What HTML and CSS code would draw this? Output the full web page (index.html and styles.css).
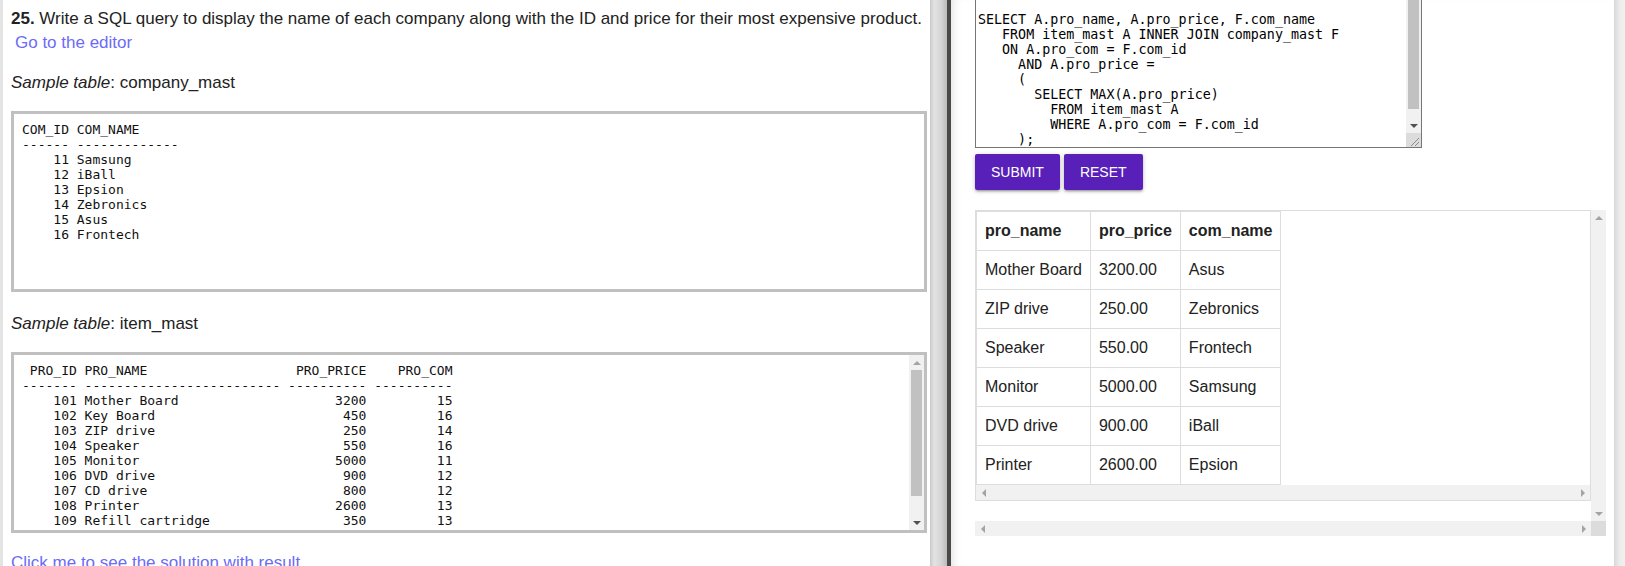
FILE: index.html
```html
<!DOCTYPE html>
<html>
<head>
<meta charset="utf-8">
<link rel="stylesheet" href="styles.css">
</head>
<body>
<div class="page">
  <div class="left">
    <p class="q"><span class="nowrap"><b>25.</b> Write a SQL query to display the name of each company along with the ID and price for their most expensive product.</span><br><a class="link">Go to the editor</a></p>
    <p class="label"><i>Sample table</i>: company_mast</p>
    <div class="sample">
<pre>COM_ID COM_NAME
------ -------------
    11 Samsung
    12 iBall
    13 Epsion
    14 Zebronics
    15 Asus
    16 Frontech</pre>
    </div>
    <p class="label after-box"><i>Sample table</i>: item_mast</p>
    <div class="sample">
<pre> PRO_ID PRO_NAME                   PRO_PRICE    PRO_COM
------- ------------------------- ---------- ----------
    101 Mother Board                    3200         15
    102 Key Board                        450         16
    103 ZIP drive                        250         14
    104 Speaker                          550         16
    105 Monitor                         5000         11
    106 DVD drive                        900         12
    107 CD drive                         800         12
    108 Printer                         2600         13
    109 Refill cartridge                 350         13</pre>
      <div class="vbar">
        <div class="sbtn"><span class="tri-up light"></span></div>
        <div class="thumb box-thumb"></div>
        <div class="fill"></div>
        <div class="sbtn"><span class="tri-down dark"></span></div>
      </div>
    </div>
    <p class="more"><a class="link">Click me to see the solution with result</a></p>
  </div>
  <div class="splitter"></div>
  <div class="divider"></div>
  <div class="right">
    <div class="editor">
<pre class="code">SELECT A.pro_name, A.pro_price, F.com_name
   FROM item_mast A INNER JOIN company_mast F
   ON A.pro_com = F.com_id
     AND A.pro_price =
     (
       SELECT MAX(A.pro_price)
         FROM item_mast A
         WHERE A.pro_com = F.com_id
     );</pre>
      <div class="vbar">
        <div class="thumb ta-thumb"></div>
        <div class="fill"></div>
        <div class="sbtn"><span class="tri-down dark"></span></div>
        <div class="resizer">
          <svg width="15" height="14" viewBox="0 0 15 14"><line x1="13" y1="5" x2="5" y2="13" stroke="#8c8c8c" stroke-width="1"/><line x1="13" y1="9" x2="9" y2="13" stroke="#8c8c8c" stroke-width="1"/></svg>
        </div>
      </div>
    </div>
    <div class="actions">
      <button class="btn">SUBMIT</button>
      <button class="btn">RESET</button>
    </div>
    <div class="result">
      <div class="res-main">
        <div class="twrap">
          <div class="tarea">
            <table>
              <thead>
                <tr><th>pro_name</th><th>pro_price</th><th>com_name</th></tr>
              </thead>
              <tbody>
                <tr><td>Mother Board</td><td>3200.00</td><td>Asus</td></tr>
                <tr><td>ZIP drive</td><td>250.00</td><td>Zebronics</td></tr>
                <tr><td>Speaker</td><td>550.00</td><td>Frontech</td></tr>
                <tr><td>Monitor</td><td>5000.00</td><td>Samsung</td></tr>
                <tr><td>DVD drive</td><td>900.00</td><td>iBall</td></tr>
                <tr><td>Printer</td><td>2600.00</td><td>Epsion</td></tr>
              </tbody>
            </table>
          </div>
          <div class="hbar">
            <div class="sbtn hbtn"><span class="tri-left light"></span></div>
            <div class="sbtn hbtn"><span class="tri-right light"></span></div>
          </div>
        </div>
      </div>
      <div class="vbar">
        <div class="sbtn"><span class="tri-up light"></span></div>
        <div class="fill"></div>
        <div class="sbtn"><span class="tri-down light"></span></div>
      </div>
      <div class="hbar">
        <div class="sbtn hbtn"><span class="tri-left light"></span></div>
        <div class="sbtn hbtn"><span class="tri-right light"></span></div>
      </div>
      <div class="corner"></div>
    </div>
  </div>
  <div class="edge"></div>
</div>
</body>
</html>
```
FILE: styles.css
```css
* { box-sizing: border-box; }
html, body { margin: 0; height: 100%; overflow: hidden; background: #fff; }
body { font-family: "Liberation Sans", Arial, sans-serif; font-size: 16px; color: #222; }

.page { display: flex; height: 566px; }

.left { width: 930px; flex: none; border-left: 3px solid #e4e4e4; padding: 7px 3px 0 8px; overflow: hidden; }
.q, .label, .more { margin: 0; line-height: 24px; font-size: 17px; }
.label { margin-top: 16px; }
.label.after-box { margin-top: 20px; }
.more { margin-top: 18px; }
.nowrap { white-space: nowrap; }
.link { color: #6b6bf8; text-decoration: none; }
.q .link { margin-left: 4px; }

.sample { margin-top: 16px; height: 181px; border: 3px solid #c0c0c0; display: flex; overflow: hidden; }
.sample pre { flex: 1; margin: 0; padding: 8px 8px 0; font: 13px/15px "DejaVu Sans Mono", monospace; color: #111; overflow: hidden; }

/* scrollbars */
.vbar { width: 15px; flex: none; background: #f1f1f1; display: flex; flex-direction: column; }
.fill { flex: 1; }
.sbtn { height: 15px; flex: none; display: flex; align-items: center; justify-content: center; }
.hbtn { width: 15px; height: 15px; }
.thumb { background: #c1c1c1; margin: 0 2px; flex: none; }
.box-thumb { height: 126px; }
.ta-thumb { height: 109px; }
.hbar { height: 15px; flex: none; background: #f1f1f1; display: flex; justify-content: space-between; }
.corner { background: #dcdcdc; }
.resizer { height: 14px; flex: none; background: #dcdcdc; display: flex; }

.tri-up, .tri-down, .tri-left, .tri-right { width: 0; height: 0; border-style: solid; border-color: transparent; }
.tri-up { border-width: 0 4px 4px; }
.tri-down { border-width: 4px 4px 0; }
.tri-left { border-width: 4px 4px 4px 0; }
.tri-right { border-width: 4px 0 4px 4px; }
.tri-up.light { border-bottom-color: #a3a3a3; }
.tri-down.light { border-top-color: #a3a3a3; }
.tri-down.dark { border-top-color: #505050; }
.tri-left.light { border-right-color: #a3a3a3; }
.tri-right.light { border-left-color: #a3a3a3; }

.splitter { width: 17px; flex: none; background: linear-gradient(to right, #c9c9c9, #e3e3e3 25%, #d5d5d5 65%, #bcbcbc); }
.divider { width: 4px; flex: none; background: #4a4b45; }
.right { width: 663px; flex: none; padding: 0 8px 0 24px; background: #fff; box-shadow: inset 8px 0 8px -6px rgba(0,0,0,.12); }
.edge { flex: 1; background: linear-gradient(to right, #d8d8d8, #ececec 50%, #f1f1f1); }

.editor { width: 447px; height: 148px; border: 1px solid #767676; border-top: 0; display: flex; background: #fff; }
.code { flex: 1; margin: 0; padding: 12px 2px 0; font: 13.333px/15px "DejaVu Sans Mono", monospace; color: #000; overflow: hidden; }

.actions { display: flex; gap: 4px; margin-top: 6px; }
.btn { height: 36px; padding: 0 16px; border: 0; border-radius: 2px; background: #5820b8; color: #fff; font: 14px "Liberation Sans", Arial, sans-serif; box-shadow: 0 2px 2px rgba(0,0,0,.14), 0 3px 1px -2px rgba(0,0,0,.12), 0 1px 5px rgba(0,0,0,.2); }

.result { margin-top: 20px; width: 631px; height: 326px; display: grid; grid-template-columns: 616px 15px; grid-template-rows: 311px 15px; }
.res-main { padding-bottom: 20px; }
.twrap { height: 291px; border: 1px solid #ddd; display: flex; flex-direction: column; }
.tarea { flex: 1; overflow: hidden; }
table { border-collapse: collapse; }
th, td { border: 1px solid #ddd; padding: 10px 8px; line-height: 18px; text-align: left; white-space: nowrap; color: #222; }
th { font-weight: bold; }
```
